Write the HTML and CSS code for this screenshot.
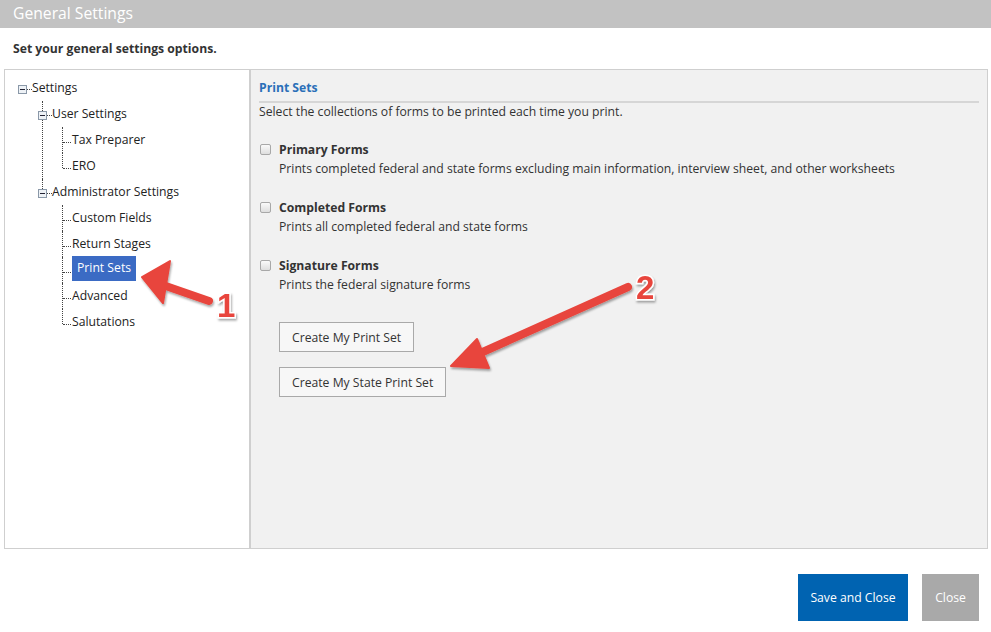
FILE: index.html
```html
<!DOCTYPE html>
<html>
<head>
<meta charset="utf-8">
<link rel="stylesheet" href="styles.css">
</head>
<body>
<div class="page">
  <div class="titlebar">General Settings</div>
  <div class="subtitle">Set your general settings options.</div>
  <div class="box">
    <div class="left">
      <ul class="tree">
        <li class="l0">
          <div class="row"><span class="exp"><svg width="9" height="9" viewBox="0 0 9 9"><rect x="0.5" y="0.5" width="8" height="8" fill="#eef2f6" stroke="#8a98a8"/><line x1="2" y1="4.5" x2="7" y2="4.5" stroke="#223" stroke-width="1"/></svg></span><span class="dash"></span><span class="label">Settings</span></div>
          <ul class="sub">
            <li class="l1">
              <div class="row"><span class="exp"><svg width="9" height="9" viewBox="0 0 9 9"><rect x="0.5" y="0.5" width="8" height="8" fill="#eef2f6" stroke="#8a98a8"/><line x1="2" y1="4.5" x2="7" y2="4.5" stroke="#223" stroke-width="1"/></svg></span><span class="dash"></span><span class="label">User Settings</span></div>
              <ul class="sub">
                <li class="leaf"><div class="row"><span class="label">Tax Preparer</span></div></li>
                <li class="leaf"><div class="row"><span class="label">ERO</span></div></li>
              </ul>
            </li>
            <li class="l1">
              <div class="row"><span class="exp"><svg width="9" height="9" viewBox="0 0 9 9"><rect x="0.5" y="0.5" width="8" height="8" fill="#eef2f6" stroke="#8a98a8"/><line x1="2" y1="4.5" x2="7" y2="4.5" stroke="#223" stroke-width="1"/></svg></span><span class="dash"></span><span class="label">Administrator Settings</span></div>
              <ul class="sub">
                <li class="leaf"><div class="row"><span class="label">Custom Fields</span></div></li>
                <li class="leaf"><div class="row"><span class="label">Return Stages</span></div></li>
                <li class="leaf"><div class="row"><span class="label selected">Print Sets</span></div></li>
                <li class="leaf"><div class="row"><span class="label">Advanced</span></div></li>
                <li class="leaf"><div class="row"><span class="label">Salutations</span></div></li>
              </ul>
            </li>
          </ul>
        </li>
      </ul>
    </div>
    <div class="right">
      <div class="section-title">Print Sets</div>
      <div class="intro">Select the collections of forms to be printed each time you print.</div>
      <div class="option">
        <div class="opt-head"><span class="check"></span><span class="opt-title">Primary Forms</span></div>
        <div class="opt-desc">Prints completed federal and state forms excluding main information, interview sheet, and other worksheets</div>
      </div>
      <div class="option">
        <div class="opt-head"><span class="check"></span><span class="opt-title">Completed Forms</span></div>
        <div class="opt-desc">Prints all completed federal and state forms</div>
      </div>
      <div class="option">
        <div class="opt-head"><span class="check"></span><span class="opt-title">Signature Forms</span></div>
        <div class="opt-desc">Prints the federal signature forms</div>
      </div>
      <div class="buttons">
        <button class="btn">Create My Print Set</button>
        <button class="btn">Create My State Print Set</button>
      </div>
    </div>
  </div>
  <div class="footer">
    <button class="primary">Save and Close</button>
    <button class="secondary">Close</button>
  </div>
  <svg class="annot" width="991" height="632" viewBox="0 0 991 632">
    <defs>
      <filter id="sh" x="-20%" y="-20%" width="140%" height="140%">
        <feDropShadow dx="1" dy="2" stdDeviation="1.2" flood-color="#000" flood-opacity="0.35"/>
      </filter>
    </defs>
    <g filter="url(#sh)" fill="#e8453c" stroke="#e8453c">
      <line x1="160" y1="284" x2="209" y2="301" stroke-width="8" stroke-linecap="round"/>
      <polygon points="142,277 170,261 163,303" stroke-width="2" stroke-linejoin="round"/>
      <line x1="476" y1="355" x2="628" y2="287" stroke-width="8" stroke-linecap="round"/>
      <polygon points="451,366 477,339 489,368" stroke-width="2" stroke-linejoin="round"/>
    </g>
    <g filter="url(#sh)" class="num">
      <text x="217" y="317">1</text>
      <text x="636" y="299">2</text>
    </g>
  </svg>
</div>
</body>
</html>
```
FILE: styles.css
```css
* { box-sizing: border-box; }
html, body { margin: 0; padding: 0; background: #fff; }
body { font-family: "Open Sans", "Noto Sans", sans-serif; font-size: 12.2px; color: #333; }
.page { position: relative; width: 991px; height: 632px; overflow: hidden; }

.titlebar {
  height: 28px;
  background: #c2c2c2;
  color: #fff;
  font-size: 15.7px;
  line-height: 26px;
  padding-left: 13px;
}
.subtitle {
  height: 41px;
  padding-left: 13px;
  padding-top: 12px;
  font-weight: 700;
  color: #333;
}
.box {
  margin-left: 4px;
  width: 984px;
  height: 480px;
  border: 1px solid #cfcfcf;
  display: flex;
}
.left {
  width: 246px;
  border-right: 2px solid #cfcfcf;
  background: #fff;
  padding: 5px 0 0 13px;
}
.right {
  flex: 1;
  background: #f1f1f1;
  padding: 8px 8px 0 8px;
}

/* tree */
.tree, .sub { list-style: none; margin: 0; padding: 0; }
.sub { padding-left: 20px; }
.row {
  height: 26px;
  display: flex;
  align-items: center;
  color: #222;
  white-space: nowrap;
}
.exp { width: 9px; height: 9px; display: flex; margin-top: 2px; }
.exp svg { display: block; }
.dash { width: 5px; border-top: 1px dotted #444; margin-top: 2px; }
.label { padding: 0; line-height: 18px; }
.selected {
  background: #3b6bc4;
  color: #fff;
  padding: 3px 5px 4px 5px;
  margin-bottom: 3px;
}
li { position: relative; }
.l1::before {
  content: "";
  position: absolute;
  left: 4px;
  top: 0;
  bottom: 0;
  border-left: 1px dotted #444;
}
.l1:last-child::before { bottom: auto; height: 10px; }
.l1 > .row .exp { position: relative; z-index: 1; background: #fff; }
.leaf > .row { padding-left: 14px; }
.leaf::before {
  content: "";
  position: absolute;
  left: 4px;
  top: 0;
  bottom: 0;
  border-left: 1px dotted #444;
}
.leaf:last-child::before { bottom: auto; height: 15px; }
.leaf::after {
  content: "";
  position: absolute;
  left: 5px;
  top: 15px;
  width: 8px;
  border-top: 1px dotted #444;
}

/* right content */
.section-title {
  color: #2a6fb8;
  font-weight: 700;
  line-height: 18px;
  padding-bottom: 4px;
  border-bottom: 2px solid #d6d6d6;
  margin-top: 1px;
}
.intro { line-height: 18px; color: #333; }
.option { margin-top: 19px; }
.opt-head { display: flex; align-items: center; height: 18px; }
.check {
  width: 11px; height: 11px;
  border: 1px solid #a8a8a8;
  border-radius: 2px;
  background: linear-gradient(#fafafa, #dedede);
  margin-left: 1px;
  margin-right: 8px;
}
.opt-title { font-weight: 700; color: #333; }
.opt-desc { padding-left: 20px; padding-top: 1px; line-height: 20px; color: #333; }
.buttons {
  padding-left: 20px;
  margin-top: 27px;
  display: flex;
  flex-direction: column;
  align-items: flex-start;
  gap: 15px;
}
.btn {
  height: 30px;
  padding: 0 12px;
  border: 1px solid #a9a9a9;
  background: #f7f7f7;
  font-family: inherit;
  font-size: 12.2px;
  color: #333;
}

.footer {
  display: flex;
  justify-content: flex-end;
  gap: 14px;
  padding-right: 12px;
  margin-top: 25px;
}
.footer button {
  height: 47px;
  border: none;
  color: #fff;
  font-family: inherit;
  font-size: 12.2px;
}
.primary { background: #0063b1; width: 110px; }
.secondary { background: #a9a9a9; width: 57px; }

.annot { position: absolute; left: 0; top: 0; pointer-events: none; }
.num text {
  font-family: "Liberation Sans", Arial, sans-serif;
  font-weight: 700;
  font-size: 33px;
  fill: #e8453c;
  stroke: #fff;
  stroke-width: 3px;
  paint-order: stroke;
}
```
